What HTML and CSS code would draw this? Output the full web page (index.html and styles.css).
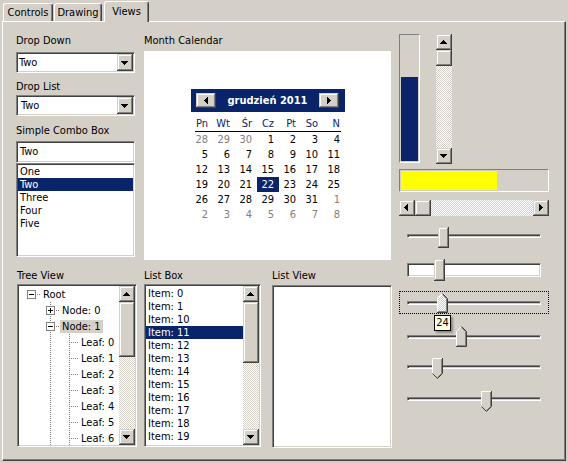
FILE: index.html
```html
<!DOCTYPE html>
<html>
<head>
<meta charset="utf-8">
<link rel="stylesheet" href="styles.css">
</head>
<body>
<div class="tabs">
  <div class="tab t1">Controls</div>
  <div class="tab t2">Drawing</div>
  <div class="tab t3">Views</div>
</div>
<div class="panel">
  <div class="left">
    <div class="top">
      <div class="colA">
        <div class="lbl">Drop Down</div>
        <div class="field combo">
          <div class="cval">Two</div>
          <div class="btn ddb"><svg width="16" height="17" viewBox="0 0 16 17"><path d="M4 7h7v1h-1v1h-1v1h-1v1H7v-1H6V9H5V8H4z" fill="#000"/></svg></div>
        </div>
        <div class="lbl l2">Drop List</div>
        <div class="field combo c2">
          <div class="cval">Two</div>
          <div class="btn ddb"><svg width="16" height="17" viewBox="0 0 16 17"><path d="M4 7h7v1h-1v1h-1v1h-1v1H7v-1H6V9H5V8H4z" fill="#000"/></svg></div>
        </div>
        <div class="lbl l3">Simple Combo Box</div>
        <div class="field edit">Two</div>
        <div class="field slist">
          <div class="li">One</div>
          <div class="li sel">Two</div>
          <div class="li">Three</div>
          <div class="li">Four</div>
          <div class="li">Five</div>
        </div>
      </div>
      <div class="colB">
        <div class="lbl">Month Calendar</div>
        <div class="calbox">
          <div class="cal">
            <div class="calhead">
              <div class="btn navb"><svg width="20" height="15" viewBox="0 0 20 15"><path d="M8 7h1V6h1V5h1V4h1v7h-1v-1h-1V9H9V8H8z" fill="#000"/></svg></div>
              <div class="ctitle">grudzień 2011</div>
              <div class="btn navb"><svg width="20" height="15" viewBox="0 0 20 15"><path d="M8 4h1v1h1v1h1v1h1v1h-1v1h-1v1H9v1H8z" fill="#000"/></svg></div>
            </div>
            <div class="dnames"><span>Pn</span><span>Wt</span><span>Śr</span><span>Cz</span><span>Pt</span><span>So</span><span>N</span></div>
            <div class="days">
              <span class="o">28</span><span class="o">29</span><span class="o">30</span><span>1</span><span>2</span><span>3</span><span>4</span>
              <span>5</span><span>6</span><span>7</span><span>8</span><span>9</span><span>10</span><span>11</span>
              <span>12</span><span>13</span><span>14</span><span>15</span><span>16</span><span>17</span><span>18</span>
              <span>19</span><span>20</span><span>21</span><span class="s">22</span><span>23</span><span>24</span><span>25</span>
              <span>26</span><span>27</span><span>28</span><span>29</span><span>30</span><span>31</span><span class="o">1</span>
              <span class="o">2</span><span class="o">3</span><span class="o">4</span><span class="o">5</span><span class="o">6</span><span class="o">7</span><span class="o">8</span>
            </div>
          </div>
        </div>
      </div>
    </div>
    <div class="bottom">
      <div class="cT">
        <div class="lbl">Tree View</div>
        <div class="field box">
          <div class="content">
            <div class="trow"><svg width="22" height="16" viewBox="0 0 22 16"><rect x="8.5" y="4.5" width="8" height="8" fill="#fff" stroke="#808080"/><path d="M10 8.5h5" stroke="#000"/><path d="M18 8.5h4" stroke="#808080" stroke-dasharray="1 1"/></svg><span class="tl">Root</span></div>
            <div class="trow"><svg width="41" height="16" viewBox="0 0 41 16"><path d="M31.5 0v16" stroke="#808080" stroke-dasharray="1 1"/><rect x="27.5" y="4.5" width="8" height="8" fill="#fff" stroke="#808080"/><path d="M29 8.5h5M31.5 6v5" stroke="#000"/><path d="M37 8.5h4" stroke="#808080" stroke-dasharray="1 1"/></svg><span class="tl">Node: 0</span></div>
            <div class="trow"><svg width="41" height="16" viewBox="0 0 41 16"><path d="M31.5 0v16M50.5 14v2" stroke="#808080" stroke-dasharray="1 1"/><rect x="27.5" y="4.5" width="8" height="8" fill="#fff" stroke="#808080"/><path d="M29 8.5h5" stroke="#000"/><path d="M37 8.5h4" stroke="#808080" stroke-dasharray="1 1"/></svg><span class="tl tsel">Node: 1</span></div>
            <div class="trow"><svg width="60" height="16" viewBox="0 0 60 16"><path d="M31.5 0v16M50.5 0v16M52 8.5h8" stroke="#808080" stroke-dasharray="1 1"/></svg><span class="tl">Leaf: 0</span></div>
            <div class="trow"><svg width="60" height="16" viewBox="0 0 60 16"><path d="M31.5 0v16M50.5 0v16M52 8.5h8" stroke="#808080" stroke-dasharray="1 1"/></svg><span class="tl">Leaf: 1</span></div>
            <div class="trow"><svg width="60" height="16" viewBox="0 0 60 16"><path d="M31.5 0v16M50.5 0v16M52 8.5h8" stroke="#808080" stroke-dasharray="1 1"/></svg><span class="tl">Leaf: 2</span></div>
            <div class="trow"><svg width="60" height="16" viewBox="0 0 60 16"><path d="M31.5 0v16M50.5 0v16M52 8.5h8" stroke="#808080" stroke-dasharray="1 1"/></svg><span class="tl">Leaf: 3</span></div>
            <div class="trow"><svg width="60" height="16" viewBox="0 0 60 16"><path d="M31.5 0v16M50.5 0v16M52 8.5h8" stroke="#808080" stroke-dasharray="1 1"/></svg><span class="tl">Leaf: 4</span></div>
            <div class="trow"><svg width="60" height="16" viewBox="0 0 60 16"><path d="M31.5 0v16M50.5 0v16M52 8.5h8" stroke="#808080" stroke-dasharray="1 1"/></svg><span class="tl">Leaf: 5</span></div>
            <div class="trow"><svg width="60" height="16" viewBox="0 0 60 16"><path d="M31.5 0v16M50.5 0v16M52 8.5h8" stroke="#808080" stroke-dasharray="1 1"/></svg><span class="tl">Leaf: 6</span></div>
          </div>
          <div class="vsb">
            <div class="btn sbtn"><svg width="16" height="16" viewBox="0 0 16 16"><path d="M7 6h1v1h1v1h1v1h1v1H4V9h1V8h1V7h1z" fill="#000"/></svg></div>
            <div class="btn thumb tthumb"></div>
            <div class="track"></div>
            <div class="btn sbtn"><svg width="16" height="16" viewBox="0 0 16 16"><path d="M4 6h7v1h-1v1h-1v1h-1v1H7V9H6V8H5V7H4z" fill="#000"/></svg></div>
          </div>
        </div>
      </div>
      <div class="cL">
        <div class="lbl">List Box</div>
        <div class="field box">
          <div class="content lcontent">
            <div class="lbi">Item: 0</div>
            <div class="lbi">Item: 1</div>
            <div class="lbi">Item: 10</div>
            <div class="lbi sel">Item: 11</div>
            <div class="lbi">Item: 12</div>
            <div class="lbi">Item: 13</div>
            <div class="lbi">Item: 14</div>
            <div class="lbi">Item: 15</div>
            <div class="lbi">Item: 16</div>
            <div class="lbi">Item: 17</div>
            <div class="lbi">Item: 18</div>
            <div class="lbi">Item: 19</div>
          </div>
          <div class="vsb">
            <div class="btn sbtn"><svg width="16" height="16" viewBox="0 0 16 16"><path d="M7 6h1v1h1v1h1v1h1v1H4V9h1V8h1V7h1z" fill="#000"/></svg></div>
            <div class="btn thumb lthumb"></div>
            <div class="track"></div>
            <div class="btn sbtn"><svg width="16" height="16" viewBox="0 0 16 16"><path d="M4 6h7v1h-1v1h-1v1h-1v1H7V9H6V8H5V7H4z" fill="#000"/></svg></div>
          </div>
        </div>
      </div>
      <div class="cV">
        <div class="lbl">List View</div>
        <div class="field box lview"></div>
      </div>
    </div>
  </div>
  <div class="right">
    <div class="r1">
      <div class="prog pv"><div class="fill navy" style="height:84px"></div></div>
      <div class="vsb vsb2">
        <div class="btn sbtn"><svg width="16" height="16" viewBox="0 0 16 16"><path d="M7 6h1v1h1v1h1v1h1v1H4V9h1V8h1V7h1z" fill="#000"/></svg></div>
        <div class="btn thumb rthumb"></div>
        <div class="track"></div>
        <div class="btn sbtn"><svg width="16" height="16" viewBox="0 0 16 16"><path d="M4 6h7v1h-1v1h-1v1h-1v1H7V9H6V8H5V7H4z" fill="#000"/></svg></div>
      </div>
    </div>
    <div class="prog ph"><div class="fill yellow" style="width:96px"></div></div>
    <div class="hsb">
      <div class="btn sbtn"><svg width="16" height="16" viewBox="0 0 16 16"><path d="M5 7h1V6h1V5h1V4h1v7H8v-1H7V9H6V8H5z" fill="#000"/></svg></div>
      <div class="btn hthumb"></div>
      <div class="track"></div>
      <div class="btn sbtn"><svg width="16" height="16" viewBox="0 0 16 16"><path d="M6 4h1v1h1v1h1v1h1v1H9v1H8v1H7v1H6z" fill="#000"/></svg></div>
    </div>

    <div class="sl s1">
      <div class="trk"></div>
      <div class="btn rth th1"></div>
    </div>
    <div class="sl s2">
      <div class="sbox"></div>
      <div class="btn rth th2"></div>
    </div>
    <div class="sl s3">
      <div class="focus"></div>
      <div class="trk"></div>
      <svg class="th th3" width="11" height="20" viewBox="0 0 11 20">
        <defs><pattern id="ck" width="2" height="2" patternUnits="userSpaceOnUse"><rect width="2" height="2" fill="#d4d0c8"/><rect width="1" height="1" fill="#fff"/><rect x="1" y="1" width="1" height="1" fill="#fff"/></pattern></defs>
        <path d="M0 5L5 0H6L11 5V20H0Z" fill="url(#ck)"/>
        <path d="M0.5 20V5.5L5.5 0.5" stroke="#fff" fill="none"/>
        <path d="M5.5 0.5L10.5 5.5V19.5H0" stroke="#404040" fill="none"/>
        <path d="M5.5 1.5L9.5 5.5V18.5H1" stroke="#808080" fill="none"/>
      </svg>
      <div class="tip">24</div>
    </div>
    <div class="sl s4">
      <div class="trk"></div>
      <svg class="th th4" width="11" height="21" viewBox="0 0 11 21">
        <path d="M0 5L5 0H6L11 5V21H0Z" fill="#d4d0c8"/>
        <path d="M0.5 21V5.5L5.5 0.5" stroke="#fff" fill="none"/>
        <path d="M5.5 0.5L10.5 5.5V20.5H0" stroke="#404040" fill="none"/>
        <path d="M5.5 1.5L9.5 5.5V19.5H1" stroke="#808080" fill="none"/>
      </svg>
    </div>
    <div class="sl s5">
      <div class="trk"></div>
      <svg class="th th5" width="11" height="21" viewBox="0 0 11 21">
        <path d="M0 0H11V16L6 21H5L0 16Z" fill="#d4d0c8"/>
        <path d="M0.5 15.5V0.5H10" stroke="#fff" fill="none"/>
        <path d="M10.5 0V15.5L5.5 20.5L0.5 15.5" stroke="#404040" fill="none"/>
        <path d="M9.5 1V15.5L5.5 19.5" stroke="#808080" fill="none"/>
      </svg>
    </div>
    <div class="sl s6">
      <div class="trk"></div>
      <svg class="th th6" width="11" height="21" viewBox="0 0 11 21">
        <path d="M0 0H11V16L6 21H5L0 16Z" fill="#d4d0c8"/>
        <path d="M0.5 15.5V0.5H10" stroke="#fff" fill="none"/>
        <path d="M10.5 0V15.5L5.5 20.5L0.5 15.5" stroke="#404040" fill="none"/>
        <path d="M9.5 1V15.5L5.5 19.5" stroke="#808080" fill="none"/>
      </svg>
    </div>
  </div>
</div>
</body>
</html>
```
FILE: styles.css
```css
* { box-sizing: border-box; }
html, body { margin: 0; padding: 0; }
body {
  width: 568px;
  height: 463px;
  overflow: hidden;
  background: #d4d0c8;
  color: #000;
  font-family: "DejaVu Sans Condensed", "DejaVu Sans", sans-serif;
  font-stretch: condensed;
  font-size: 11px;
  line-height: 13px;
}
svg { display: block; }

/* tabs */
.tabs { display: flex; align-items: flex-end; height: 21px; }
.tab {
  height: 18px;
  padding-top: 2px;
  text-align: center;
  border: 1px solid;
  border-bottom: 0;
  border-color: #fff #404040 #fff #fff;
  box-shadow: inset -1px 0 #808080;
  border-radius: 3px 3px 0 0;
  position: relative;
  white-space: nowrap;
}
.t1 { margin-left: 3px; width: 50px; }
.t2 { margin-left: 1px; width: 48px; }
.t3 {
  margin-left: 2px;
  width: 45px;
  height: 21px;
  margin-bottom: -1px;
  padding-top: 3px;
  background: #d4d0c8;
  z-index: 2;
}

/* panel */
.panel {
  display: flex;
  width: 564px;
  height: 440px;
  margin-left: 2px;
  border: 1px solid;
  border-color: #fff #404040 #404040 #fff;
  box-shadow: inset -1px -1px #808080;
  padding-left: 13px;
}
.left { width: 376px; display: flex; flex-direction: column; }
.top { display: flex; height: 238px; }
.colA { width: 119px; margin-right: 9px; padding-top: 12px; }
.colB { width: 247px; padding-top: 12px; }
.lbl { height: 13px; white-space: nowrap; }

/* generic 3d */
.field {
  background: #fff;
  border: 1px solid;
  border-color: #808080 #fff #fff #808080;
  box-shadow: inset 1px 1px #404040, inset -1px -1px #d4d0c8;
  padding: 1px;
}
.btn {
  background: #d4d0c8;
  box-shadow: inset -1px -1px #404040, inset 1px 1px #d4d0c8, inset -2px -2px #808080, inset 2px 2px #fff;
}
.track {
  flex: 1;
  background: repeating-conic-gradient(#fff 0 25%, #d4d0c8 0 50%) 0 0 / 2px 2px;
}

/* combos */
.combo { height: 21px; display: flex; margin-top: 5px; }
.cval { flex: 1; padding-left: 1px; line-height: 17px; }
.c2 .cval { padding-left: 3px; }
.ddb { width: 16px; height: 17px; flex: none; }
.l2 { margin-top: 7px; }
.c2 { margin-top: 2px; }
.l3 { margin-top: 8px; }
.edit { height: 22px; margin-top: 4px; line-height: 18px; padding-left: 3px; }
.slist { height: 94px; }
.li { height: 13px; padding-left: 2px; }
.sel { background: #0a246a; color: #fff; }

/* calendar */
.calbox { margin-top: 4px; height: 209px; background: #fff; padding: 38px 0 0 47px; }
.cal { width: 154px; }
.calhead {
  height: 23px;
  background: #0a246a;
  display: flex;
  align-items: center;
  justify-content: space-between;
  padding: 0 6px 0 5px;
}
.navb { width: 20px; height: 15px; }
.ctitle { color: #fff; font-weight: bold; font-size: 11px; white-space: nowrap; }
.dnames {
  display: grid;
  grid-template-columns: repeat(7, 22px);
  height: 16px;
  margin-top: 4px;
  color: #0a246a;
  background: linear-gradient(#000, #000) 4px 15px / 146px 1px no-repeat;
}
.dnames span, .days span { text-align: right; padding-right: 5px; line-height: 15px; }
.days { display: grid; grid-template-columns: repeat(7, 22px); grid-auto-rows: 15px; }
.days .o { color: #808080; }
.days .s { background: #0a246a; color: #fff; }

/* bottom row */
.bottom { display: flex; margin-top: 9px; }
.cT { width: 120px; margin-left: 1px; }
.cL { width: 117px; margin-left: 7px; }
.cV { width: 120px; margin-left: 11px; }
.box { margin-top: 2px; height: 163px; display: flex; }
.lview { margin-top: 3px; }
.content { flex: 1; overflow: hidden; min-width: 0; }
.lcontent { padding-top: 1px; }
.vsb { width: 16px; display: flex; flex-direction: column; flex: none; }
.sbtn { width: 16px; height: 16px; flex: none; }
.thumb { flex: none; }
.tthumb { height: 55px; }
.lthumb { height: 61px; }
.rthumb { height: 16px; }
.trow { display: flex; align-items: center; height: 16px; white-space: nowrap; }
.trow svg { flex: none; }
.tl { padding: 0 2px; height: 13px; line-height: 13px; }
.tsel { background: #d4d0c8; }
.lbi { height: 13px; padding-left: 2px; white-space: nowrap; }

/* right column */
.right { width: 150px; margin-left: 7px; padding-top: 12px; display: flex; flex-direction: column; }
.r1 { display: flex; height: 130px; flex: none; }
.prog {
  border: 1px solid;
  border-color: #808080 #fff #fff #808080;
  padding: 1px;
  display: flex;
  flex: none;
}
.pv { width: 21px; height: 129px; flex-direction: column; justify-content: flex-end; }
.ph { margin-top: 5px; height: 23px; width: 150px; }
.navy { background: #0a246a; }
.yellow { background: #ffff00; }
.vsb2 { margin-left: 16px; height: 130px; }
.hsb { margin-top: 8px; height: 16px; display: flex; flex: none; }
.hthumb { width: 16px; height: 16px; flex: none; }

/* sliders */
.sl { position: relative; height: 32px; flex: none; }
.s1 { margin-top: 9px; }
.trk {
  margin: 0 8px;
  height: 4px;
  border: 1px solid;
  border-color: #808080 #fff #fff #808080;
  box-shadow: inset 1px 1px #404040, inset -1px -1px #d4d0c8;
}
.s1 .trk { margin-top: 9px; }
.s3 .trk { margin-top: 12px; }
.s4 .trk { margin-top: 14px; }
.s5 .trk { margin-top: 12px; }
.s6 .trk { margin-top: 12px; }
.sbox {
  margin: 6px 8px 0;
  height: 14px;
  background: #fff;
  border: 1px solid;
  border-color: #808080 #fff #fff #808080;
  box-shadow: inset 1px 1px #404040, inset -1px -1px #d4d0c8;
}
.th { position: absolute; }
.rth { position: absolute; width: 11px; height: 21px; }
.th1 { left: 39px; top: 2px; }
.th2 { left: 35px; top: 2px; height: 22px; }
.th3 { left: 38px; top: 4px; }
.th4 { left: 57px; top: 5px; }
.th5 { left: 33px; top: 5px; }
.th6 { left: 82px; top: 6px; }
.focus {
  position: absolute;
  left: 0;
  top: 2px;
  width: 150px;
  height: 23px;
  border: 1px dotted #000;
}
.tip {
  position: absolute;
  left: 35px;
  top: 26px;
  width: 17px;
  height: 16px;
  background: #ffffe1;
  border: 1px solid #000;
  box-shadow: 2px 2px 2px rgba(0, 0, 0, 0.35);
  text-align: center;
  line-height: 14px;
  z-index: 3;
}
```
